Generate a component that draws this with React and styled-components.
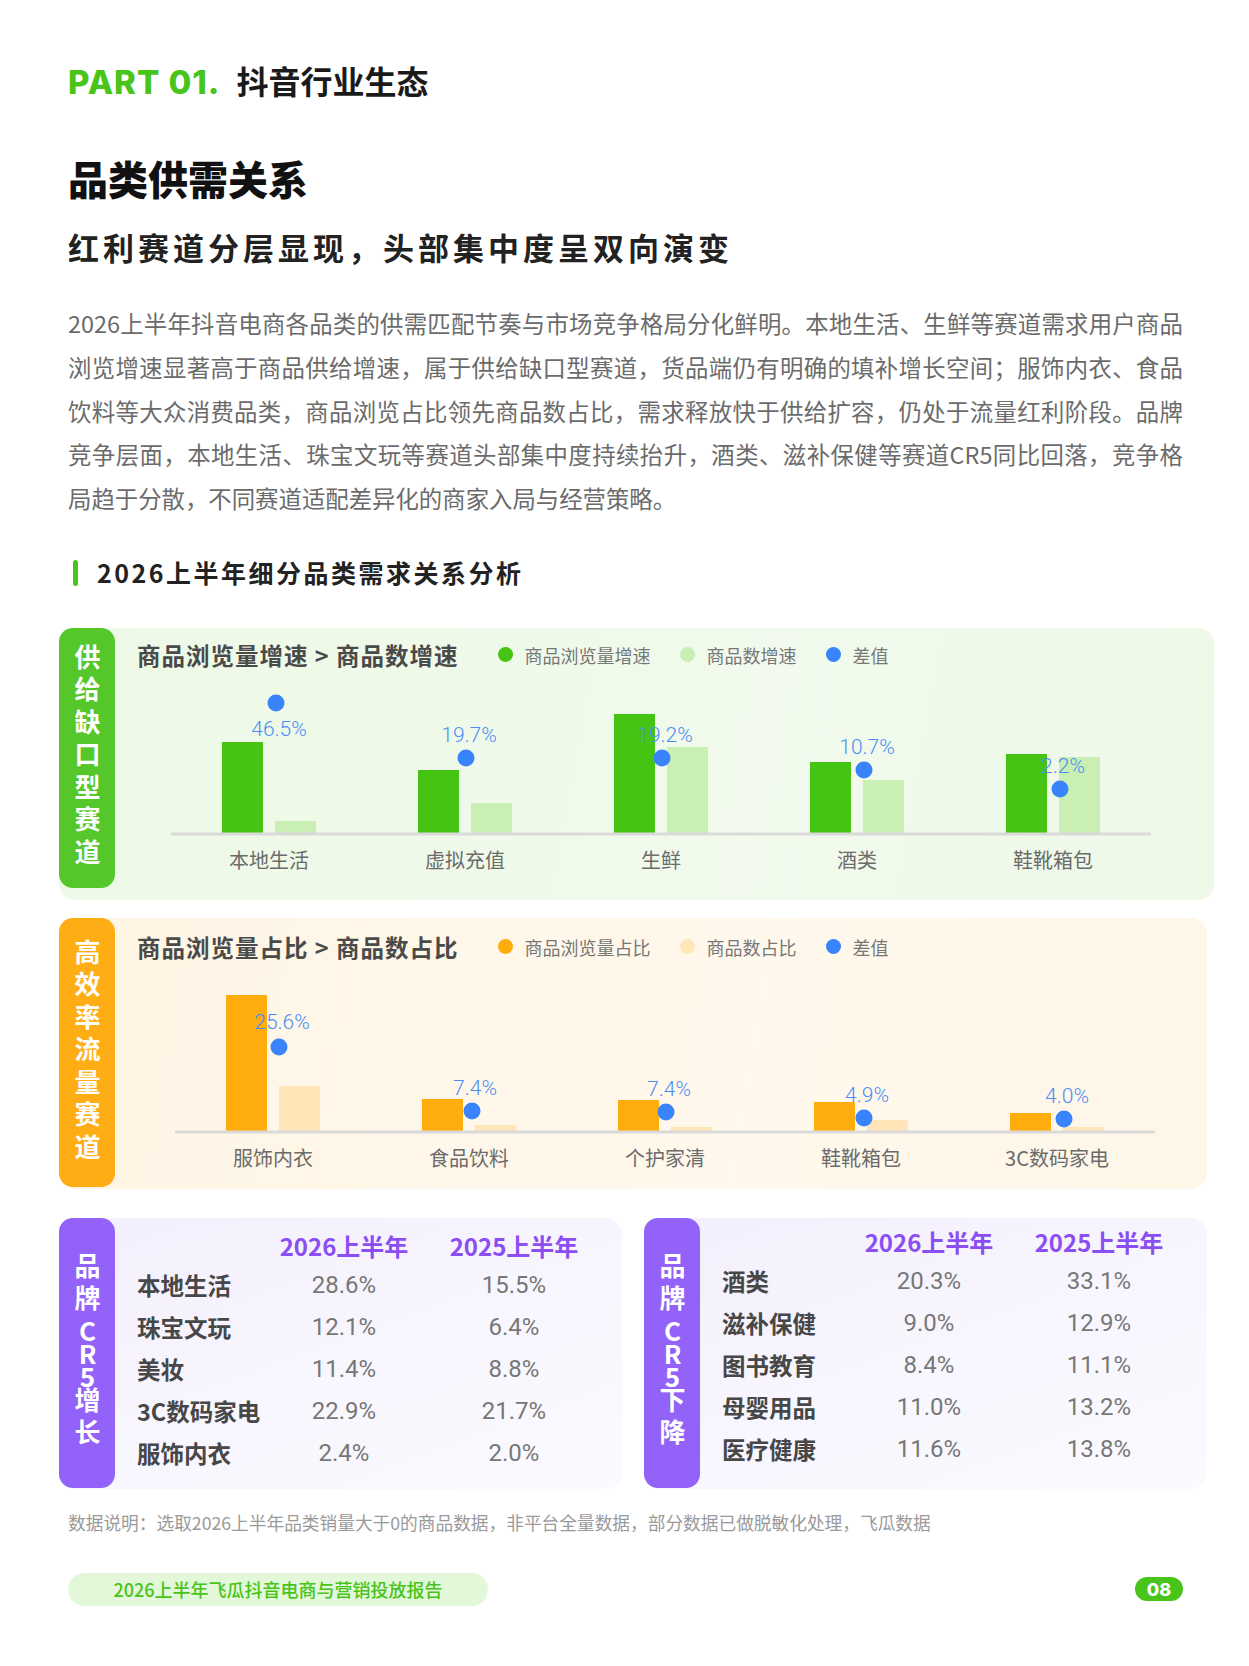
import styled, { createGlobalStyle } from "styled-components";

const cjk = `"Noto Sans CJK SC", "Noto Sans", sans-serif`;
const num = `Roboto, "Noto Sans CJK SC", sans-serif`;

const GlobalStyle = createGlobalStyle`
  html, body {
    margin: 0;
    padding: 0;
    background: #ffffff;
  }
  body {
    font-family: ${cjk};
  }
`;

const introLines = [
  "2026上半年抖音电商各品类的供需匹配节奏与市场竞争格局分化鲜明。本地生活、生鲜等赛道需求用户商品",
  "浏览增速显著高于商品供给增速，属于供给缺口型赛道，货品端仍有明确的填补增长空间；服饰内衣、食品",
  "饮料等大众消费品类，商品浏览占比领先商品数占比，需求释放快于供给扩容，仍处于流量红利阶段。品牌",
  "竞争层面，本地生活、珠宝文玩等赛道头部集中度持续抬升，酒类、滋补保健等赛道CR5同比回落，竞争格",
  "局趋于分散，不同赛道适配差异化的商家入局与经营策略。",
];

// bar heights / dot heights / label heights are px above the axis
const supplyGap = [
  { name: "本地生活", a: 91, b: 12, dot: 130, dx: 7, label: "46.5%", ly: 104 },
  { name: "虚拟充值", a: 63, b: 30, dot: 75, dx: 1, label: "19.7%", ly: 98 },
  { name: "生鲜", a: 119, b: 86, dot: 75, dx: 1, label: "19.2%", ly: 98 },
  { name: "酒类", a: 71, b: 53, dot: 63, dx: 7, label: "10.7%", ly: 86 },
  { name: "鞋靴箱包", a: 79, b: 76, dot: 44, dx: 7, label: "2.2%", ly: 67 },
];

const trafficShare = [
  { name: "服饰内衣", a: 136, b: 45, dot: 84, dx: 6, label: "25.6%", ly: 109 },
  { name: "食品饮料", a: 32, b: 6, dot: 20, dx: 3, label: "7.4%", ly: 43 },
  { name: "个护家清", a: 31, b: 4, dot: 19, dx: 1, label: "7.4%", ly: 42 },
  { name: "鞋靴箱包", a: 29, b: 11, dot: 13, dx: 3, label: "4.9%", ly: 36 },
  { name: "3C数码家电", a: 18, b: 4, dot: 12, dx: 7, label: "4.0%", ly: 35 },
];

const growth = [
  ["本地生活", "28.6%", "15.5%"],
  ["珠宝文玩", "12.1%", "6.4%"],
  ["美妆", "11.4%", "8.8%"],
  ["3C数码家电", "22.9%", "21.7%"],
  ["服饰内衣", "2.4%", "2.0%"],
];

const decline = [
  ["酒类", "20.3%", "33.1%"],
  ["滋补保健", "9.0%", "12.9%"],
  ["图书教育", "8.4%", "11.1%"],
  ["母婴用品", "11.0%", "13.2%"],
  ["医疗健康", "11.6%", "13.8%"],
];

function VerticalText({ text }) {
  return (
    <TagText>
      {[...text].map((c, i) => (
        <TagChar key={i} $latin={/[A-Za-z0-9]/.test(c)}>
          {c}
        </TagChar>
      ))}
    </TagText>
  );
}

function BarChart({ data, x0, axisY, height, main, light }) {
  const step = 196;
  return (
    <ChartSvg width="100%" height={height}>
      {data.map((d, i) => {
        const cx = x0 + 98 + step * i;
        return (
          <g key={d.name}>
            <rect x={cx - 47} y={axisY - d.a} width="41" height={d.a} fill={main} />
            <rect x={cx + 6} y={axisY - d.b} width="41" height={d.b} fill={light} />
          </g>
        );
      })}
      <line x1={x0} x2={x0 + step * 5} y1={axisY + 1} y2={axisY + 1} stroke="#dadada" strokeWidth="3" />
      {data.map((d, i) => {
        const cx = x0 + 98 + step * i;
        return (
          <g key={d.name + "-v"}>
            <circle cx={cx + d.dx} cy={axisY - d.dot} r="8.5" fill="#3a84fb" />
            <text
              x={cx + d.dx + 3}
              y={axisY - d.ly}
              textAnchor="middle"
              dominantBaseline="central"
              fill="#4b8df7"
              fontFamily="Roboto, sans-serif"
              fontWeight="300"
              fontSize="21"
            >
              {d.label}
            </text>
            <text
              x={cx}
              y={axisY + 26}
              textAnchor="middle"
              dominantBaseline="central"
              fill="#6b6b6b"
              fontFamily={cjk}
              fontSize="20"
            >
              {d.name}
            </text>
          </g>
        );
      })}
    </ChartSvg>
  );
}

function ChartPanel({ tag, tagColor, bg, title, legend, mr, tagH, height, padTop, chart }) {
  return (
    <Panel $bg={bg} $mr={mr} $h={height}>
      <SideTag $color={tagColor} $h={tagH}>
        <VerticalText text={tag} />
      </SideTag>
      <PanelBody>
        <ChartHeader $top={padTop}>
          <ChartTitle>{title}</ChartTitle>
          <Legend>
            {legend.map(([label, color]) => (
              <LegendItem key={label}>
                <LegendDot $color={color} />
                {label}
              </LegendItem>
            ))}
          </Legend>
        </ChartHeader>
        {chart}
      </PanelBody>
    </Panel>
  );
}

function CrCard({ tag, rows, padTop }) {
  return (
    <Card>
      <SideTag $color="#9362f8" $h={270}>
        <VerticalText text={tag} />
      </SideTag>
      <CardBody $top={padTop}>
        <CrTable>
          <span />
          <HeadCell>2026上半年</HeadCell>
          <HeadCell>2025上半年</HeadCell>
          {rows.map(([name, now, before]) => [
            <RowLabel key={name}>{name}</RowLabel>,
            <ValueCell key={name + "1"}>{now}</ValueCell>,
            <ValueCell key={name + "2"}>{before}</ValueCell>,
          ])}
        </CrTable>
      </CardBody>
    </Card>
  );
}

export default function App() {
  return (
    <>
      <GlobalStyle />
      <Page>
        <PartRow>
          <PartLabel>PART 01.</PartLabel>
          <PartTitle>抖音行业生态</PartTitle>
        </PartRow>

        <Title>品类供需关系</Title>
        <Subtitle>红利赛道分层显现，头部集中度呈双向演变</Subtitle>

        <Intro>
          {introLines.map((line, i) => (
            <IntroLine key={i} $last={i === introLines.length - 1}>
              {line}
            </IntroLine>
          ))}
        </Intro>

        <SectionHeading>2026上半年细分品类需求关系分析</SectionHeading>

        {/* 供给缺口型赛道 */}
        <ChartPanel
          tag="供给缺口型赛道"
          tagColor="#55c72a"
          bg="linear-gradient(100deg, #edf9e6 0%, #f1faec 60%, #eef9e8 100%)"
          title="商品浏览量增速 > 商品数增速"
          legend={[
            ["商品浏览量增速", "#46c414"],
            ["商品数增速", "#c9efb2"],
            ["差值", "#3a84fb"],
          ]}
          mr={-31}
          tagH={260}
          height={272}
          padTop={12}
          chart={
            <BarChart data={supplyGap} x0={56} axisY={163} height={205} main="#46c414" light="#c9efb2" />
          }
        />

        {/* 高效率流量赛道 */}
        <ChartPanel
          tag="高效率流量赛道"
          tagColor="#ffad14"
          bg="linear-gradient(100deg, #fef5e4 0%, #fff8ec 60%, #fef6e7 100%)"
          title="商品浏览量占比 > 商品数占比"
          legend={[
            ["商品浏览量占比", "#ffad0d"],
            ["商品数占比", "#ffe5b8"],
            ["差值", "#3a84fb"],
          ]}
          mr={-24}
          tagH={269}
          height={271}
          padTop={14}
          chart={
            <BarChart data={trafficShare} x0={60} axisY={169} height={210} main="#ffad0d" light="#ffe5b8" />
          }
        />

        <CardRow>
          <CrCard tag="品牌CR5增长" rows={growth} padTop={10} />
          <CrCard tag="品牌CR5下降" rows={decline} padTop={6} />
        </CardRow>

        <Footnote>
          数据说明：选取2026上半年品类销量大于0的商品数据，非平台全量数据，部分数据已做脱敏化处理，飞瓜数据
        </Footnote>

        <Footer>
          <ReportPill>2026上半年飞瓜抖音电商与营销投放报告</ReportPill>
          <PageBadge>08</PageBadge>
        </Footer>
      </Page>
    </>
  );
}

const Page = styled.div`
  width: 1249px;
  min-height: 1666px;
  box-sizing: border-box;
  padding: 60px 66px 40px 68px;
  background: #ffffff;
`;

const PartRow = styled.div`
  display: flex;
  align-items: baseline;
  gap: 16px;
  height: 40px;
`;

const PartLabel = styled.span`
  font-family: Inter, "Liberation Sans", sans-serif;
  font-weight: 800;
  font-size: 33px;
  line-height: 40px;
  letter-spacing: 1px;
  color: #48c41a;
`;

const PartTitle = styled.span`
  font-family: ${cjk};
  font-weight: 700;
  font-size: 32px;
  line-height: 40px;
  color: #1a1a1a;
`;

const Title = styled.h1`
  margin: 54px 0 0;
  font-family: ${cjk};
  font-weight: 900;
  font-size: 40px;
  line-height: 48px;
  color: #111111;
`;

const Subtitle = styled.h2`
  margin: 25px 0 0;
  font-family: ${cjk};
  font-weight: 700;
  font-size: 31px;
  line-height: 40px;
  letter-spacing: 4px;
  color: #222222;
`;

const Intro = styled.p`
  margin: 35px 0 0;
  width: 1115px;
  font-family: ${cjk};
  font-size: 23.4px;
  line-height: 43.75px;
  color: #6b6b6b;
`;

const IntroLine = styled.span`
  display: block;
  white-space: nowrap;
  text-align: justify;
  text-align-last: ${(p) => (p.$last ? "left" : "justify")};
`;

const SectionHeading = styled.h3`
  position: relative;
  margin: 35px 0 0;
  padding-left: 29px;
  font-family: ${cjk};
  font-weight: 700;
  font-size: 25px;
  line-height: 32px;
  letter-spacing: 2.5px;
  color: #222222;

  &::before {
    content: "";
    position: absolute;
    left: 5px;
    top: 4px;
    width: 5px;
    height: 26px;
    border-radius: 3px;
    background: #48c41a;
  }
`;

const Panel = styled.section`
  display: flex;
  align-items: flex-start;
  height: ${(p) => p.$h}px;
  margin: 40px ${(p) => p.$mr}px 0 -9px;
  border-radius: 16px;
  background: ${(p) => p.$bg};

  & + & {
    margin-top: 18px;
  }
`;

const SideTag = styled.div`
  flex: 0 0 56px;
  height: ${(p) => p.$h}px;
  border-radius: 14px;
  background: ${(p) => p.$color};
  display: flex;
  align-items: center;
  justify-content: center;
  color: #ffffff;
  font-family: ${cjk};
  font-weight: 700;
  font-size: 26px;
`;

const TagText = styled.span`
  writing-mode: vertical-rl;
  text-orientation: upright;
  line-height: 1;
`;

const TagChar = styled.span`
  letter-spacing: ${(p) => (p.$latin ? -3 : 6.5)}px;
`;

const PanelBody = styled.div`
  flex: 1;
  min-width: 0;
`;

const ChartHeader = styled.div`
  display: flex;
  align-items: center;
  height: 30px;
  padding: ${(p) => p.$top}px 0 0 22px;
`;

const ChartTitle = styled.span`
  font-family: ${cjk};
  font-weight: 700;
  font-size: 23.5px;
  letter-spacing: 1px;
  color: #4a4a4a;
  white-space: pre;
`;

const Legend = styled.div`
  display: flex;
  align-items: center;
  gap: 29px;
  margin-left: 39px;
`;

const LegendItem = styled.span`
  display: flex;
  align-items: center;
  gap: 12px;
  font-family: ${cjk};
  font-size: 18px;
  color: #777777;
`;

const LegendDot = styled.i`
  width: 15px;
  height: 15px;
  border-radius: 50%;
  background: ${(p) => p.$color};
`;

const ChartSvg = styled.svg`
  display: block;
  overflow: visible;
`;

const CardRow = styled.div`
  display: flex;
  gap: 22px;
  margin: 29px -24px 0 -9px;
`;

const Card = styled.div`
  flex: 1;
  display: flex;
  align-items: flex-start;
  height: 271px;
  border-radius: 16px;
  background: linear-gradient(160deg, #f3effd 0%, #f8f6fe 55%, #fbfaff 100%);
`;

const CardBody = styled.div`
  flex: 1;
  padding: ${(p) => p.$top}px 0 0 22px;
`;

const CrTable = styled.div`
  display: grid;
  grid-template-columns: 126px 162px 178px;
  grid-template-rows: 36px repeat(5, 42px);
  align-items: center;
`;

const HeadCell = styled.span`
  text-align: center;
  font-family: ${cjk};
  font-weight: 700;
  font-size: 24px;
  color: #8b4ef3;
`;

const RowLabel = styled.span`
  white-space: nowrap;
  font-family: ${cjk};
  font-weight: 700;
  font-size: 23.5px;
  color: #474747;
`;

const ValueCell = styled.span`
  text-align: center;
  font-family: ${num};
  font-size: 24px;
  color: #777777;
`;

const Footnote = styled.p`
  margin: 21px 0 0;
  font-family: ${cjk};
  font-size: 17.7px;
  line-height: 24px;
  color: #9a9a9a;
`;

const Footer = styled.div`
  display: flex;
  align-items: center;
  justify-content: space-between;
  margin-top: 39px;
`;

const ReportPill = styled.div`
  width: 420px;
  height: 33px;
  border-radius: 17px;
  background: #e3f7d9;
  display: flex;
  align-items: center;
  justify-content: center;
  font-family: ${cjk};
  font-weight: 500;
  font-size: 18px;
  color: #48c41a;
`;

const PageBadge = styled.div`
  width: 48px;
  height: 24px;
  border-radius: 12px;
  background: #48c41a;
  display: flex;
  align-items: center;
  justify-content: center;
  font-family: Inter, "Liberation Sans", sans-serif;
  font-weight: 800;
  font-size: 18px;
  color: #ffffff;
`;
